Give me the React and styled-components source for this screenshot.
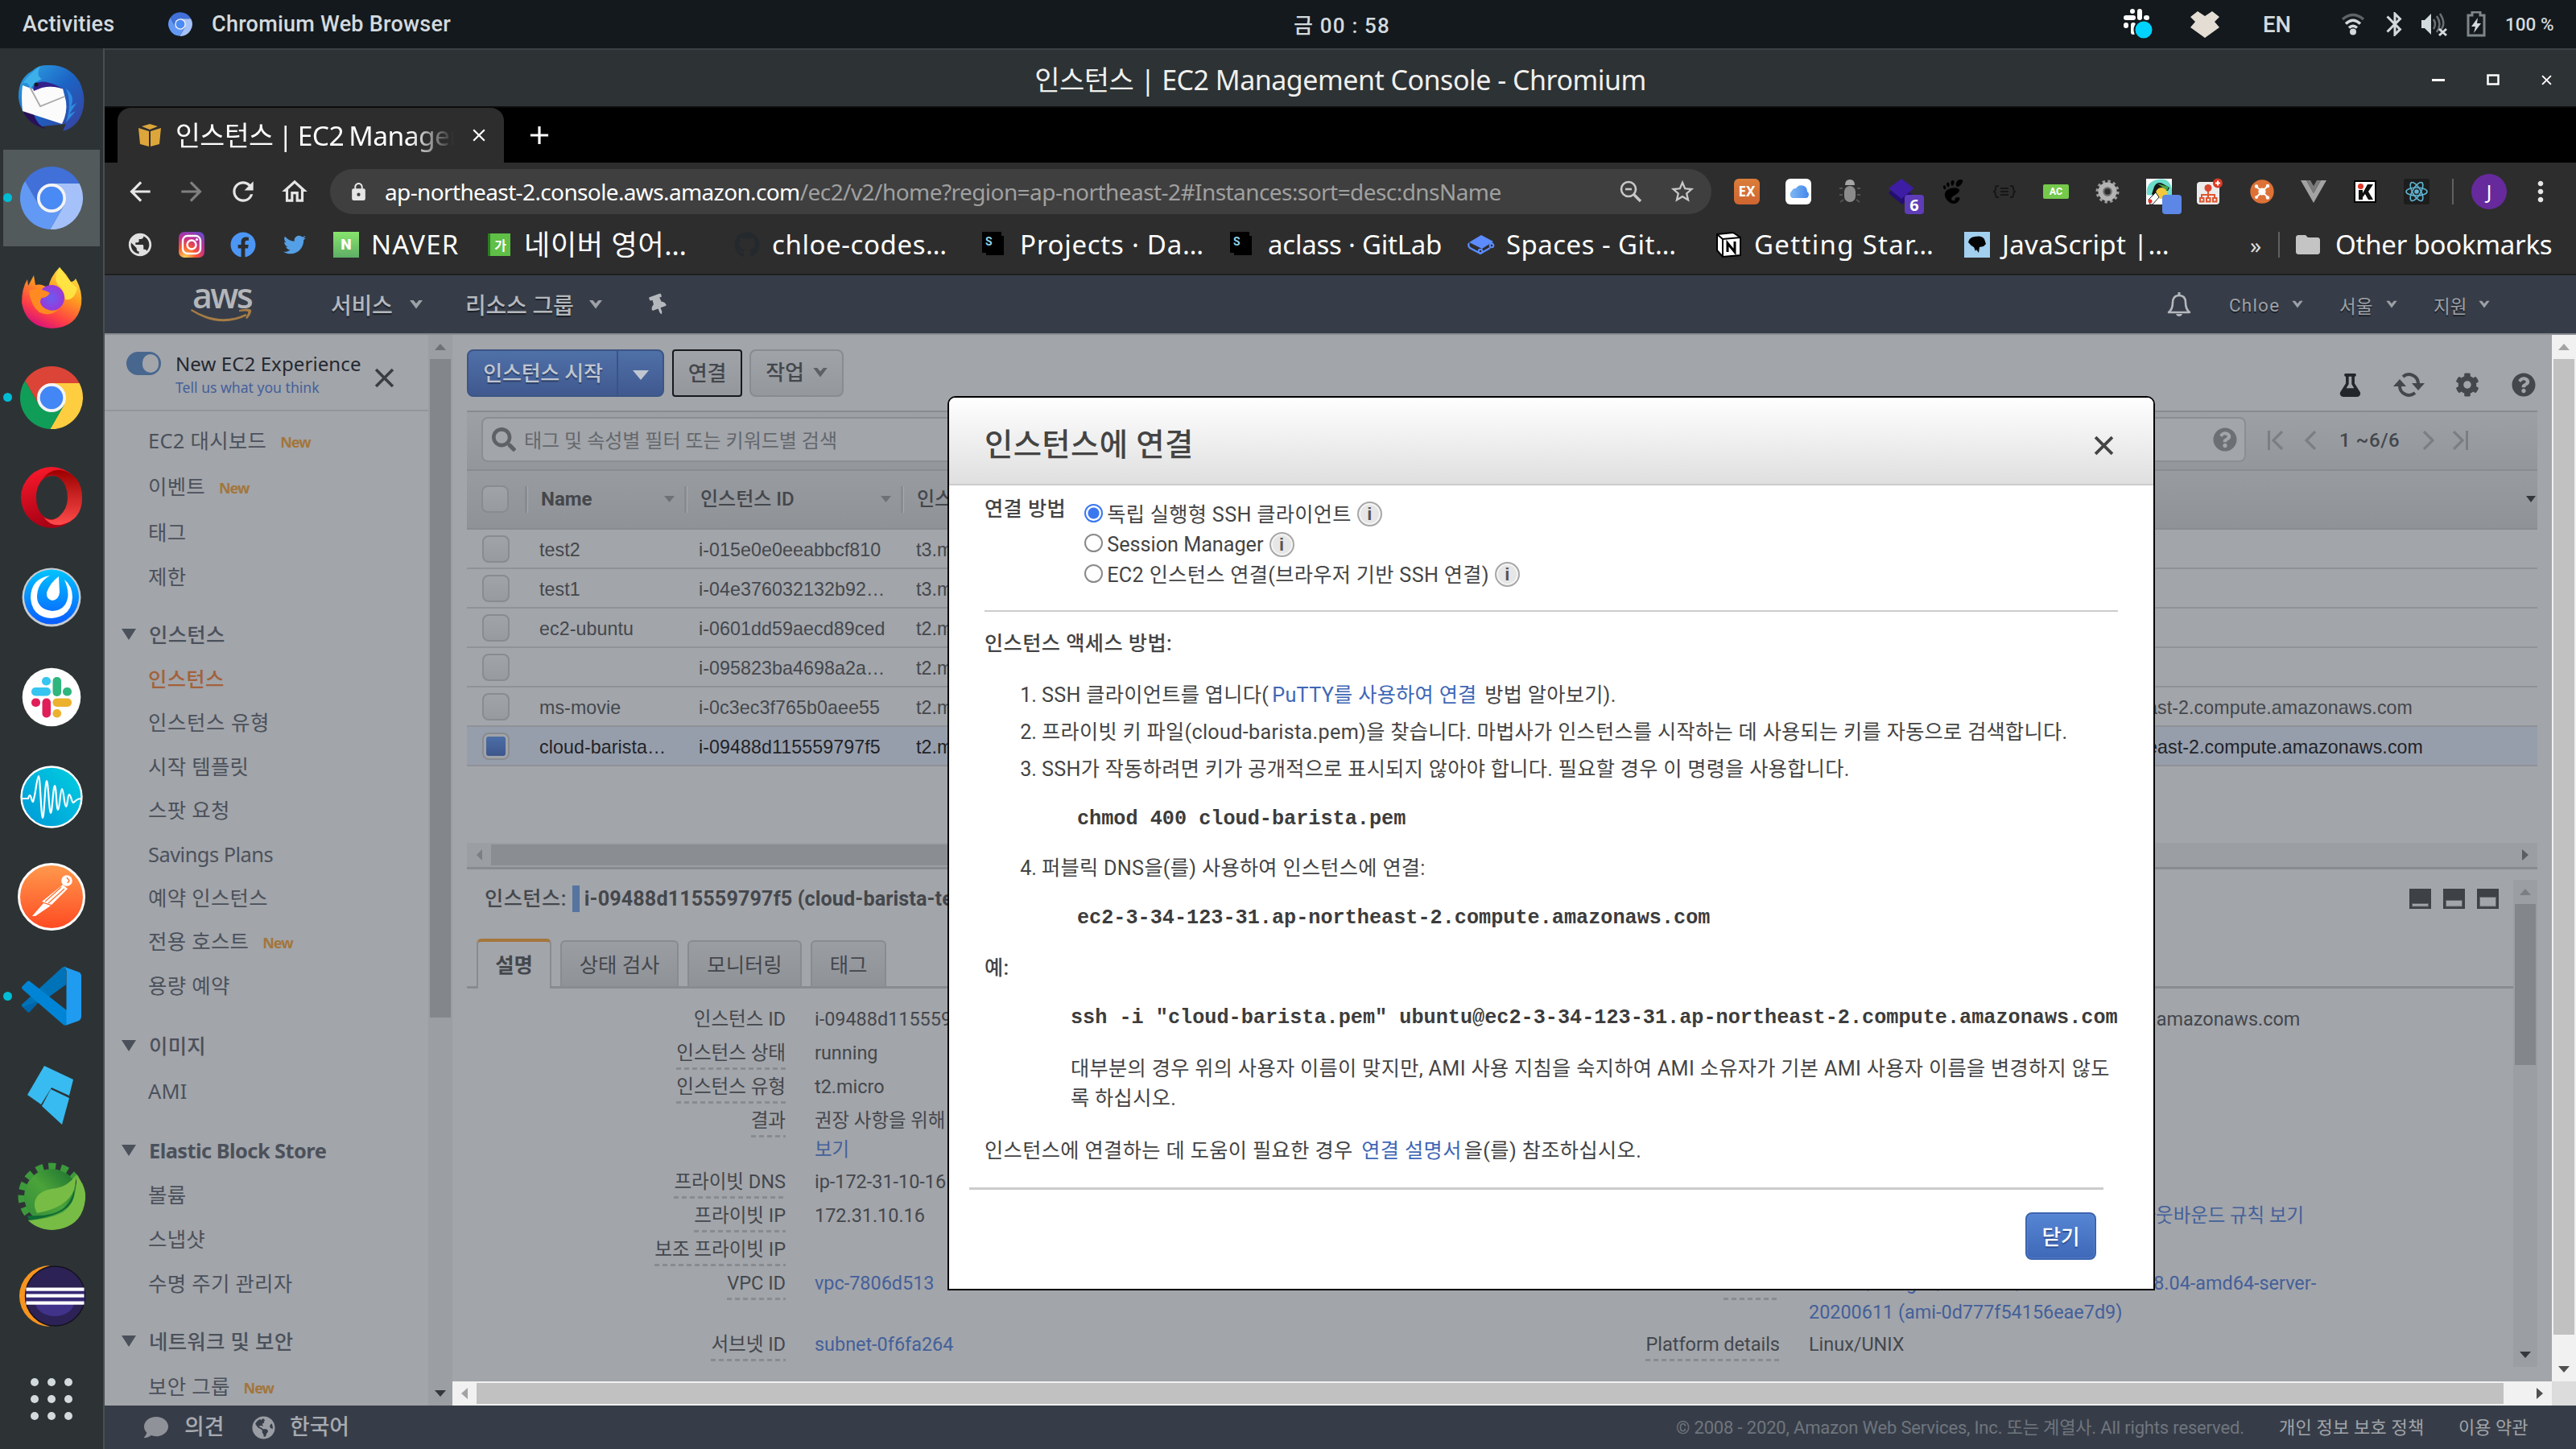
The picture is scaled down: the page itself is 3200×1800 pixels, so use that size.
import React from "react";
import styled, { createGlobalStyle, css } from "styled-components";
import {
  MdArrowBack, MdArrowForward, MdRefresh, MdLock, MdOutlineHome, MdStarBorder, MdMoreVert,
  MdFolder, MdBluetooth, MdAdd, MdClose, MdPublic,
} from "react-icons/md";
import {
  FaTwitter, FaFacebook, FaGithub, FaFlask, FaCog, FaQuestionCircle,
  FaThumbtack, FaSearch, FaComment, FaGlobeAmericas,
} from "react-icons/fa";
import { SiGnome } from "react-icons/si";

const ui = 'Roboto, "Noto Sans CJK KR", sans-serif';
const humanist = '"Noto Sans", "Noto Sans CJK KR", sans-serif';
const arial = '"Liberation Sans", "Noto Sans CJK KR", sans-serif';
const mono = '"Liberation Mono", monospace';

const dim = {
  bg: "#a2a5aa", line: "#888b90", text: "#44474c", nav: "#4b515b", link: "#44609a",
  header: "#373d48", track: "#9b9fa3", thumb: "#83878c",
};

const Global = createGlobalStyle`
  html, body { margin: 0; background: #000; overflow: hidden; }
  * { box-sizing: border-box; }
  svg { display: block; flex: none; }
`;

/* ---------- shell ---------- */
const Screen = styled.div`
  width: 3200px; height: 1800px; display: flex; flex-direction: column;
  font-family: ${ui}; color: ${dim.text}; white-space: nowrap; overflow: hidden;
`;
const TopBar = styled.header`
  height: 60px; flex: none; background: #14191d; color: #d3dade; font-size: 26px; font-weight: 500;
  display: grid; align-items: center;
  grid-template-columns: 208px 55px 1344px 1030px 84px 90px 97px 49px 49px 58px 48px 1fr;
  & > :first-child { padding-left: 28px; }
`;
const TopText = styled.span`
  letter-spacing: ${(p) => p.$ls || 0}px; font-size: ${(p) => p.$s || 26}px; font-weight: ${(p) => p.$w || 500};
`;
const Clock = styled(TopText)`margin-top: -2px;`;
const Below = styled.div`flex: 1; display: flex; min-height: 0;`;
const Dock = styled.nav`
  width: 130px; flex: none; background: #2d3335; border-right: 2px solid #484e51;
  display: flex; flex-direction: column;
`;
const DockItem = styled.div`
  height: 124px; width: 128px; display: flex; align-items: center; justify-content: center;
  padding: 2px 4px; position: relative;
`;
const DockTile = styled.div`
  width: 120px; height: 120px; display: flex; align-items: center; justify-content: center;
  background: ${(p) => (p.$active ? "#535a5b" : "transparent")};
`;
const RunDot = styled.i`
  position: absolute; left: 4px; top: 56px; width: 11px; height: 11px; border-radius: 50%; background: #00bcd4;
`;
const AppGrid = styled.div`
  flex: 1; display: grid; grid-template-columns: repeat(3, 10px); gap: 11px; place-content: center; padding-top: 4px;
  i { width: 10px; height: 10px; border-radius: 50%; background: #d3dade; }
`;

/* ---------- browser ---------- */
const Browser = styled.div`flex: 1; min-width: 0; display: flex; flex-direction: column; position: relative;`;
const TitleBar = styled.div`
  height: 72px; flex: none; background: #2d3234; border-top: 2px solid #3b4144; color: #f0f0ee;
  font: 400 34px/74px ${humanist}; letter-spacing: -0.5px;
  display: grid; grid-template-columns: 1fr auto 1fr; align-items: center;
`;
const WinButtons = styled.div`
  display: flex; justify-content: flex-end; align-items: center; gap: 52px; padding-right: 30px; height: 66px;
`;
const TabStrip = styled.div`
  height: 70px; flex: none; background: #000; border-top: 2px solid #0b0c0c; display: flex; padding-left: 16px;
`;
const Tab = styled.div`
  width: 480px; height: 68px; background: #2d2d2d; border-radius: 16px 16px 0 0; color: #fff;
  display: grid; grid-template-columns: 28px 346px 1fr; column-gap: 18px; align-items: center; padding-left: 26px;
`;
const TabTitle = styled.div`
  overflow: hidden; font: 400 33.6px/64px ${humanist}; letter-spacing: -0.55px; word-spacing: -2px;
  mask-image: linear-gradient(90deg, #000 84%, transparent 100%);
`;
const NewTab = styled.div`color: #fff; display: flex; align-items: center; margin-left: 25px; font-size: 38px;`;
const Toolbar = styled.div`
  height: 72px; flex: none; background: #2d2d2d; display: flex; align-items: center; color: #e6e6e6;
`;
const NavButtons = styled.div`
  display: grid; grid-template-columns: repeat(4, 64px); justify-items: center; width: 268px; padding-left: 12px;
  margin-right: 12px; font-size: 38px;
`;
const NavIcon = styled.span`color: ${(p) => (p.$off ? "#808080" : "#e6e6e6")};`;
const Address = styled.div`
  width: 1716px; height: 56px; border-radius: 28px; background: #3f3f3f; display: flex; align-items: center;
  padding: 0 4px 0 23px; font: 400 28px/54px ${humanist};
`;
const UrlHost = styled.span`color: #fff; margin-left: 20px; letter-spacing: -0.63px;`;
const UrlPath = styled.span`color: #a0a0a0; letter-spacing: -0.56px; flex: 1;`;
const AddressIcon = styled.span`width: 64px; display: flex; justify-content: center; color: #c8c8c8;`;
const Extensions = styled.div`
  display: grid; grid-template-columns: repeat(14, 64px); justify-items: center; align-items: center; margin-left: 12px;
`;
const Ext = styled.div`position: relative; width: 32px; height: 32px; display: flex; align-items: center; justify-content: center;`;
const ExtBadge = styled.span`
  position: absolute; left: 20px; top: 20px; width: 24px; height: 24px; border-radius: 4px; background: ${(p) => p.$c};
  color: #fff; font: 700 20px/25px ${humanist}; text-align: center;
`;
const ExBox = styled.div`
  width: 32px; height: 32px; border-radius: 6px; background: linear-gradient(#db7d3a, #cf6530); color: #fff;
  font: 700 17px/32px ${humanist}; text-align: center;
`;
const AcBox = styled.div`
  width: 32px; height: 18px; border-radius: 2px; background: #75c94b; color: #fff;
  font: 700 12.5px/18px ${ui}; text-align: center;
`;
const Divider = styled.i`width: 2px; height: 32px; background: #606060; margin-left: ${(p) => p.$ml || 0}px;`;
const Avatar = styled.div`
  width: 44px; height: 44px; border-radius: 50%; background: #662a9c; color: #fff; margin: 0 22px;
  font: 400 24px/44px ${humanist}; text-align: center;
`;
const Bookmarks = styled.div`
  height: 68px; flex: none; background: #2d2d2d; border-bottom: 2px solid #1f1f1f; color: #fff; display: flex;
  align-items: center; padding-left: 12px; padding-bottom: 6px;
`;
const IconMark = styled.div`width: ${(p) => p.$w || 64}px; display: flex; justify-content: center; font-size: 32px; color: ${(p) => p.$c || "#fff"};`;
const MarkGap = styled.i`width: 16px;`;
const Bookmark = styled.div`width: ${(p) => p.$w}px; display: flex; align-items: center; gap: 15px;`;
const MarkIcon = styled.div`width: 32px; height: 32px; display: flex; align-items: center; justify-content: center; font-size: 32px;`;
const MarkLabel = styled.span`font: 400 ${(p) => p.$s || 33}px/60px ${humanist}; letter-spacing: ${(p) => p.$ls || 0}px;`;
const NBox = styled.div`
  width: 32px; height: 32px; background: linear-gradient(#87e46c, #5fae66); color: #fff;
  font: 900 19px/32px ${ui}; text-align: center;
`;
const GaBox = styled.div`
  width: 28px; height: 28px; background: #5fbf46; color: #fff; border-left: 3px solid #2c7d22; font: 700 16px/30px ${humanist}; text-align: center;
`;
const ShellBox = styled.div`
  width: 24px; height: 26px; background: #000; color: #8fd0e8; font: 700 14px/24px ${ui}; padding-left: 4px; align-self: flex-start;
  margin-right: 8px; box-shadow: 4px 4px 0 -1px #000;
`;
const More = styled.span`font: 400 28px/60px ${humanist}; color: #ddd; margin-left: 47px; width: 35px;`;

/* ---------- console ---------- */
const AwsHeader = styled.div`
  height: 74px; flex: none; background: ${dim.header}; border-bottom: 2px solid #888c92; color: #b4b8bd;
  display: grid; align-items: center; text-shadow: 0 2px 1px #1c2027;
  grid-template-columns: 281px 98px 69px 154px 73px 1887px 77px 78px 59px 58px 59px 56px 1fr;
  & > :first-child { margin-left: 107px; }
`;
const AwsLogo = styled.div`
  width: 76px; height: 72px; font: 600 43px/50px "Open Sans", sans-serif; letter-spacing: -2.6px; color: #b4b6ba;
  padding-left: 2px; text-shadow: none;
  svg { margin: -9px 0 0 -2px; }
`;
const NavText = styled.span`font-size: 28px; font-weight: 500; letter-spacing: -0.2px;`;
const NavSmall = styled.span`font-size: 22.5px; letter-spacing: ${(p) => p.$ls || 0}px; color: #9da1a7; padding-top: 2px;`;
const Pin = styled(FaThumbtack)`transform: rotate(-20deg);`;
const Console = styled.div`height: 1330px; flex: none; display: flex; background: ${dim.bg};`;

const Sidebar = styled.aside`width: 402px; height: 1330px; overflow: hidden; font-family: ${humanist}; color: ${dim.nav};`;
const Experience = styled.div`
  height: 95px; border-bottom: 2px solid #92969b; display: flex; padding: 21px 0 0 27px;
`;
const Toggle = styled.div`
  width: 43px; height: 29px; border-radius: 15px; background: #48678f; display: flex; justify-content: flex-end; padding: 3px;
  i { width: 20px; height: 23px; border-radius: 12px; background: ${dim.bg}; }
`;
const ExperienceText = styled.div`margin: -2px 0 0 18px; width: 247px; font-size: 24px; line-height: 34px; color: #24282f; letter-spacing: 0.1px;`;
const ExperienceSub = styled.div`font-size: 17.6px; line-height: 24px; color: ${dim.link}; letter-spacing: 0;`;
const ExperienceClose = styled.div`padding-top: 20px;`;
const NavList = styled.div`padding-top: 8px;`;
const NavItem = styled.div`
  height: ${(p) => p.$h || 54.4}px; line-height: ${(p) => p.$h || 54.4}px; padding-left: 54px; font-size: 25.4px;
  display: flex; letter-spacing: ${(p) => p.$ls ?? 0.3}px;
  ${(p) => p.$on && css`color: #a3623a; font-weight: 500; letter-spacing: 0.3px;`}
`;
const NewTag = styled.sup`
  font-size: 18px; font-weight: 700; color: #a3763c; margin-left: 17px; line-height: inherit; vertical-align: 0; letter-spacing: -1px;
  padding-top: 2px;
`;
const NavGroup = styled.div`
  margin-top: ${(p) => p.$mt || 17}px; height: 56px; font: 500 25.4px/56px ${humanist}; display: flex; align-items: center;
  padding-left: 21px; gap: 16px; letter-spacing: 0.3px; span { font-weight: ${(p) => p.$w || 500}; letter-spacing: ${(p) => p.$ls ?? 0.3}px; }
`;

const VBar = styled.div`
  width: 30px; flex: none; height: ${(p) => p.$h}px; background: ${(p) => p.$bg}; display: flex; flex-direction: column; align-items: center;
`;
const HBar = styled.div`height: 30px; flex: none; width: ${(p) => p.$w}px; background: ${(p) => p.$bg}; display: flex; align-items: center;`;
const BarEnd = styled.div`width: 30px; height: 30px; flex: none; display: flex; align-items: center; justify-content: center;`;
const VThumb = styled.i`width: 26px; height: ${(p) => p.$h}px; background: ${(p) => p.$c}; margin-bottom: auto;`;
const HThumb = styled.i`height: 26px; width: ${(p) => p.$w}px; background: ${(p) => p.$c}; margin-right: auto;`;

const Right = styled.div`flex: 1; min-width: 0; display: flex; flex-direction: column;`;
const RightTop = styled.div`display: flex; height: 1300px;`;
const RightBottom = styled.div`display: flex; height: 30px; background: #dcdcdc;`;
const Panel = styled.main`width: 2608px; height: 1300px; padding: 0 18px; display: flex; flex-direction: column; color: ${dim.text};`;
const Actions = styled.div`height: 94px; display: flex; padding-top: 18px;`;
const btn = css`height: 59px; border-radius: 8px; font: 500 26px/57px ${ui}; letter-spacing: -0.2px; text-align: center;`;
const Split = styled.div`
  ${btn} width: 245px; background: linear-gradient(#4f70a8, #40598f); border: 2px solid #3c5585; color: #c0c6d0;
  display: flex; text-shadow: 0 2px 1px #2c4068;
`;
const SplitMain = styled.div`width: 186px; border-right: 2px solid #3a5386; padding-left: 1px;`;
const SplitArrow = styled.div`flex: 1; display: flex; align-items: center; justify-content: center; padding-top: 5px;`;
const FocusButton = styled.div`${btn} width: 87px; margin-left: 10px; border: 2px solid #17191c; border-radius: 4px; background: linear-gradient(#a0a3a8, #94989d);`;
const GreyButton = styled.div`
  ${btn} width: 117px; margin-left: 9px; border: 2px solid ${dim.line}; background: linear-gradient(#a0a3a8, #94989d);
  display: flex; align-items: center; justify-content: center; gap: 11px;
  svg { margin-top: -2px; }
`;
const Tools = styled.div`
  margin-left: auto; display: grid; grid-template-columns: 26px 39px 28px 30px; column-gap: 40px; align-items: center; height: 86px; margin-top: 1px;
  padding-right: 2px; color: #44474c; font-size: 30px;
  svg:nth-child(1) { margin-left: -2px; } svg:nth-child(3) { margin-left: -2px; }
`;
const FilterBar = styled.div`
  height: 73px; border-top: 2px solid ${dim.line}; background: linear-gradient(#9da1a6, #93979c); display: flex; padding: 6px 0 0 18px;
`;
const SearchBox = styled.div`
  width: 2192px; height: 56px; border: 2px solid #8a8e93; border-radius: 8px; background: ${dim.bg}; display: flex; align-items: center;
  padding: 0 9px 0 11px; font-size: 24px; color: #64686d; justify-content: space-between;
  span { flex: 1; margin-left: 10px; line-height: 52px; padding-top: 3px; }
`;
const Pager = styled.div`
  display: grid; grid-template-columns: 46px 43px 103px 37px 20px; margin-left: 27px; align-items: center; height: 58px; color: #7b7f84;
  b { font-weight: 500; font-size: 24px; color: ${dim.text}; letter-spacing: 0.5px; }
`;
const cols = css`display: grid; align-items: center; grid-template-columns: 72px 198px 269px 1fr;`;
const THead = styled.div`
  ${cols} height: 75px; border-top: 2px solid ${dim.line}; border-bottom: 2px solid ${dim.line};
  background: linear-gradient(#989b9f, #8f9297); font: 500 24px/38px ${ui};
`;
const Th = styled.div`
  height: 33px; border-left: 3px solid #888b90; box-shadow: inset 1px 0 0 #a8abb0; display: flex; align-items: center;
  justify-content: space-between; padding: 0 ${(p) => p.$pr ?? 12}px 0 17px; margin-top: -1px; font-weight: ${(p) => p.$w || 500};
`;
const Check = styled.i`
  width: 34px; height: 34px; margin-left: ${(p) => (p.$head ? 18 : 19)}px; border: 2px solid ${dim.line}; border-radius: 8px; display: block;
  background: ${(p) => (p.$on ? "linear-gradient(#4c6da6,#3e578d) content-box, #a0a3a8" : "linear-gradient(#a0a3a8,#979a9f)")};
  padding: 3px; ${(p) => p.$head && "margin-top: -1px;"}
`;
const Tr = styled.div`
  display: grid; align-items: center; grid-template-columns: 90px 198px 270px 1fr;
  height: 49px; border-bottom: 2px solid #8f9297; font: 400 23.2px/46px ${arial}; letter-spacing: 0.1px;
  span { padding-top: 2px; }
  ${(p) => p.$on && css`background: #979eab; color: #1f2329;`}
`;
const TypeCell = styled.div`display: flex; justify-content: space-between;`;
const Dns = styled.span`margin-right: ${(p) => p.$r}px;`;
const TableFoot = styled.div`margin-top: 95px;`;
const Rule = styled.i`display: block; height: ${(p) => p.$h || 2}px; background: ${(p) => p.$c || dim.line}; margin-top: ${(p) => p.$mt || 0}px;`;

const Detail = styled.section`height: 636px; display: flex; overflow: hidden;`;
const DetailBody = styled.div`width: 2542px; display: flex; flex-direction: column;`;
const DetailBar = styled.div`padding-top: 13px;`;
const DetailTitle = styled.div`
  height: 86px; display: flex; align-items: center; font: 700 25.2px/37px ${ui}; padding: 0 18px 14px 22px; letter-spacing: 0.1px;
  span { font-weight: 500; letter-spacing: 0.5px; }
  i { width: 9px; height: 33px; background: #56749f; margin: 0 6px 0 7px; }
  div { margin-left: auto; display: flex; gap: 15px; }
`;
const Tabs = styled.div`height: 62px; display: flex; align-items: flex-end; padding-left: 12px; border-bottom: 3px solid ${dim.line}; font-size: 25.4px;`;
const DTab = styled.div`
  width: ${(p) => p.$w}px; height: ${(p) => (p.$on ? 60 : 57)}px; line-height: 58px; text-align: center; margin-right: ${(p) => p.$mr ?? 11}px;
  border: 2px solid ${dim.line}; border-bottom: 0; border-radius: 6px 6px 0 0; background: linear-gradient(#9a9da2, #8f9398);
  ${(p) => p.$on && css`background: ${dim.bg}; font-weight: 700; border-top: 4px solid #a5763c; margin-bottom: -3px; height: 62px;`}
`;
const Facts = styled.div`
  display: grid; grid-template-columns: 396px 767px 396px 1fr; column-gap: 36px; margin-top: 17px; font-size: 23.6px; align-items: start;
  grid-template-rows: 42px 42px 42px 76px 42px 42px 42px 76px 42px; color: ${dim.text};
`;
const Label = styled.span`
  justify-self: end; line-height: 42px; height: 42px; letter-spacing: -0.05px;
  ${(p) => p.$tip && css`background: repeating-linear-gradient(90deg, ${dim.line} 0 6px, transparent 6px 10px) 0 100% / 100% 3px no-repeat;`}
`;
const Value = styled.span`
  font-size: 23.42px; line-height: ${(p) => p.$lh || 42}px; ${(p) => p.$link && `color: ${dim.link};`} white-space: pre-line; padding-top: ${(p) => p.$pt || 0}px;
  em { font-style: normal; color: ${dim.link}; }
`;

const Footer = styled.footer`
  height: 54px; flex: none; background: ${dim.header}; display: grid; align-items: center; color: #a7abb1; font: 500 26.8px/52px ${ui};
  grid-template-columns: 50px 84px 47px 1722px 749px 223px 1fr; padding-left: 49px;
`;
const FootText = styled.span`font-size: 22px; font-weight: 400; letter-spacing: ${(p) => p.$ls || 0}px; color: ${(p) => p.$c || "#a0a4aa"}; padding-top: 1px;`;

/* ---------- dialog ---------- */
const Dialog = styled.div`
  position: absolute; left: 1047px; top: 432px; width: 1500px; height: 1111px; background: #fff; border: 2px solid #000;
  border-radius: 10px 10px 0 0; color: #444; font-size: 25.2px; letter-spacing: 0.36px; overflow: hidden;
`;
const DialogHead = styled.div`
  height: 109px; background: linear-gradient(#fff, #dfdfdf); border-bottom: 2px solid #ccc; display: flex; align-items: center;
  justify-content: space-between; padding: 11px 49px 0 44px; font: 500 38.4px/60px ${ui};
`;
const DialogBody = styled.div`padding: 11px 44px 0 44px; line-height: 37px;`;
const Strong = styled.b`font-weight: 500; letter-spacing: 0.45px; display: block; margin-top: ${(p) => p.$mt || 0}px;`;
const Methods = styled.div`display: flex; gap: 23px;`;
const MethodList = styled.div`padding-top: 7px; margin-bottom: 1px;`;
const Method = styled.div`height: 37.5px; line-height: 38px; display: flex; align-items: center; letter-spacing: ${(p) => p.$ls ?? 0.33}px;`;
const Radio = styled.i`
  width: 23px; height: 23px; border-radius: 50%; border: 2px solid ${(p) => (p.$on ? "#3b78f0" : "#8a8a8a")}; margin: -5px 5px 0 0;
  background: ${(p) => (p.$on ? "radial-gradient(circle, #3b78f0 0 6.5px, #fff 7.5px)" : "#fff")};
`;
const Info = styled.span`
  width: 31px; height: 31px; border-radius: 50%; border: 2px solid #a8a8a8; background: #e6e6e6; box-shadow: inset 0 0 0 2px #f5f5f5;
  font: 700 22px/27px ${arial}; text-align: center; color: #555; margin: -2px 0 0 7px; letter-spacing: 0;
`;
const Steps = styled.div`margin-top: 23px; display: grid; grid-template-columns: 71px 1fr;`;
const StepNo = styled.span`line-height: 46px; text-align: right; padding-right: 6px; letter-spacing: 0;`;
const Step = styled.div`line-height: 46px; letter-spacing: ${(p) => p.$ls ?? 0.31}px;`;
const Link = styled.a`color: #3f67b5; padding: 0 ${(p) => p.$r ?? 3}px 0 4px;`;
const Code = styled.code`
  grid-column: 1 / -1; display: block; font: 700 25.21px/${(p) => p.$h}px ${mono}; letter-spacing: 0; height: ${(p) => p.$h}px; padding-left: ${(p) => p.$pl}px; color: #3c3c3c;
`;
const Note = styled.p`margin: 0 0 0 107px; white-space: pre-line; letter-spacing: 0.34px;`;
const Help = styled.p`margin: 28px 0 0; letter-spacing: 0.4px;`;
const DialogFoot = styled.div`
  margin: 27px 62px 0 25px; border-top: 3px solid #ccc; display: flex; justify-content: flex-end; padding: 28px 9px 0 0;
`;
const Close = styled.button`
  width: 88px; height: 59px; border: 2px solid #3c64b0; border-radius: 8px; background: linear-gradient(#5585d4, #3f68b8); color: #fff;
  font: 500 25.6px/52px ${ui}; text-shadow: 0 2px 1px #2d4d8f; padding: 3px 0 0; box-shadow: inset 0 0 0 1px #6b95da66;
`;

/* ---------- small drawings ---------- */
const Tri = ({ d = "down", w = 14, h = 8, c = "#505050" }) => {
  const p = { down: `0,0 ${w},0 ${w / 2},${h}`, up: `0,${h} ${w},${h} ${w / 2},0`, left: `${w},0 ${w},${h} 0,${h / 2}`, right: `0,0 0,${h} ${w},${h / 2}` }[d];
  return <svg width={w} height={h}><polygon points={p} fill={c} /></svg>;
};
const Caret = ({ w = 16, h = 10, c = "#9da1a7" }) => (
  <svg width={w} height={h + 2} viewBox="0 0 16 12"><path d="M0 1h4.5l3.5 4L11.500 1H16L8 11.500z" fill={c} /></svg>
);
const Cross = ({ s = 24, c = "#3a3d42", w = 3.4 }) => (
  <svg width={s} height={s} viewBox="0 0 24 24"><path d="M2 2l20 20M22 2L2 22" stroke={c} strokeWidth={w} /></svg>
);
const Chev = ({ flip, bar }) => (
  <svg width="20" height="24" viewBox="0 0 20 24">
    <g transform={flip ? "translate(20 0) scale(-1 1)" : undefined}>
      {bar && <path d="M1.500 0v24" stroke="#7b7f84" strokeWidth="3" />}
      <path d={bar ? "M18 1L7 12l11 11" : flip ? "M18 1L7 12l11 11" : "M13 1L2 12l11 11"} fill="none" stroke="#7b7f84" strokeWidth="3.200" />
    </g>
  </svg>
);
const PaneIcon = ({ y }) => (
  <svg width="27" height="25"><rect width="27" height="25" fill="#3e4146" /><rect x="3.500" y={y} width="20" height={22 - y} fill={dim.bg} stroke="#63666b" strokeWidth="1" /></svg>
);
const Box = ({ children, s = 84 }) => <svg width={s} height={s} viewBox="0 0 84 84">{children}</svg>;

const Wheel = ({ top, left, right, hub, s = 84 }) => (
  <Box s={s}>
    <g transform="translate(42 42)">
      <path d="M-32.900-21L-15.600 9L0 0L0-18L34.600-18A39 39 0 0 0-32.900-21z" fill={top} />
      <path d="M34.600-18L0-18L0 0L15.600 9L-1.700 39A39 39 0 0 0 34.600-18z" fill={right} />
      <path d="M-1.700 39L15.600 9L0 0L-15.600 9L-32.900-21A39 39 0 0 0-1.700 39z" fill={left} />
      <circle r="18" fill="#f4f4f4" /><circle r="14.300" fill={hub} />
    </g>
  </Box>
);
const Chromium = ({ s }) => <Wheel s={s} top="#4170d8" left="#6299f5" right="#a4c1f9" hub="#4a8af4" />;
const Chrome = () => <Wheel top="#dc4437" left="#109d58" right="#fecd40" hub="#4386f5" />;

const Thunderbird = () => (
  <Box>
    <defs><linearGradient id="tb" x1="0" y1="0" x2="1" y2="1"><stop offset="0" stopColor="#2fa8e6" /><stop offset=".5" stopColor="#1c63c4" /><stop offset="1" stopColor="#3a3f9c" /></linearGradient></defs>
    <path d="M18 8Q26 0 38 1Q64 0 77 22Q86 42 80 60Q74 78 56 83L60 74L30 77Q4 66 1 42Q0 18 18 8z" fill="url(#tb)" />
    <path d="M20 62Q24 76 36 80Q14 76 6 57z" fill="#2a1058" />
    <path d="M6 26L20 31Q36 24 56 30L60 46Q62 60 55 74L6 58Q4 40 6 26z" fill="#fbfbfb" />
    <path d="M15 28L28 52L58 40" fill="none" stroke="#a9a9a9" strokeWidth="1.800" />
    <path d="M22 24Q30 18 48 26L58 31Q44 25 30 29L20 33Q18 30 22 24z" fill="#33208a" />
    <path d="M6 24Q14 12 28 2Q22 14 30 18Q20 22 16 30Q12 20 6 24z" fill="#3db0ea" />
    <circle cx="23" cy="25" r="2.600" fill="#15181c" />
    <path d="M60 30Q72 40 66 52L73 48L64 62L72 58L60 72Q68 48 60 30z" fill="#2d8be0" />
  </Box>
);
const Firefox = () => (
  <Box>
    <defs>
      <linearGradient id="ff" x1=".8" y1="0" x2=".3" y2="1"><stop offset="0" stopColor="#fff04a" /><stop offset=".4" stopColor="#ff9a1f" /><stop offset=".75" stopColor="#ff3f45" /><stop offset="1" stopColor="#d6107e" /></linearGradient>
      <radialGradient id="fp"><stop offset="0" stopColor="#6a5cf0" /><stop offset="1" stopColor="#9a38d6" /></radialGradient>
    </defs>
    <path d="M52 4Q60 12 66 22Q70 22 72 18Q81 34 79 50Q74 79 42 80Q10 78 5 48Q5 30 12 19L13 27L20 14L22 26Q30 24 38 30Q40 16 52 4z" fill="url(#ff)" />
    <circle cx="42" cy="42" r="16" fill="url(#fp)" />
    <path d="M14 33Q26 28 40 36Q36 42 30 42Q26 46 30 52Q38 60 50 57Q40 66 27 60Q16 52 14 33z" fill="#ff8a22" />
    <path d="M52 4Q44 18 50 26Q58 32 59 44Q70 46 74 30Q62 20 52 4z" fill="#ffe845" opacity=".9" />
  </Box>
);
const Opera = () => (
  <Box>
    <defs><linearGradient id="op" x1="0" y1="0" x2=".3" y2="1"><stop offset="0" stopColor="#ff1b2d" /><stop offset="1" stopColor="#a70014" /></linearGradient><linearGradient id="or" x1="0" y1="0" x2="0" y2="1"><stop offset="0" stopColor="#9c0000" /><stop offset="1" stopColor="#ff4b4b" /></linearGradient></defs>
    <path fillRule="evenodd" d="M42 4A38 38 0 1 0 42 80A38 38 0 1 0 42 4zM43 15C56 15 62 28 62 42S56 69 43 69S23 56 23 42S30 15 43 15z" fill="url(#op)" />
    <path d="M30 20Q40 6 54 8Q80 14 80 42Q80 70 54 76Q40 78 32 66Q42 74 52 65Q62 56 62 42Q62 26 52 18Q42 10 30 20z" fill="url(#or)" />
  </Box>
);
const Mattermost = () => (
  <Box>
    <defs><linearGradient id="mm" x1="0" y1="0" x2="0" y2="1"><stop offset="0" stopColor="#00c3ff" /><stop offset="1" stopColor="#0b5cff" /></linearGradient></defs>
    <circle cx="42" cy="42" r="36.500" fill="#c9ccd0" /><circle cx="42" cy="41.500" r="34" fill="url(#mm)" />
    <path d="M40 15Q16 19 16 43Q18 67 42 68Q67 66 68 42Q68 28 58 20Q64 34 62 43Q59 58 43 59Q25 57 24 42Q24 24 40 15z" fill="#fff" />
    <path d="M51 16L52 36Q51 45 43 46Q35 44 36 36Q40 24 51 16z" fill="#fff" />
  </Box>
);
const Slack = () => (
  <Box>
    <circle cx="42" cy="42" r="36.300" fill="#fff" />
    <g fill="#36c5f0"><rect x="30" y="17" width="11" height="10.500" rx="5" /><rect x="17" y="30" width="24" height="10.500" rx="5" /></g>
    <g fill="#2eb67d"><rect x="43.500" y="17" width="10.500" height="24" rx="5" /><rect x="56" y="30" width="11" height="10.500" rx="5" /></g>
    <g fill="#e01e5a"><rect x="17" y="43.500" width="11" height="10.500" rx="5" /><rect x="30.500" y="43.500" width="10.500" height="24" rx="5" /></g>
    <g fill="#ecb22e"><rect x="43.500" y="43.500" width="23.500" height="10.500" rx="5" /><rect x="43.500" y="57" width="10.500" height="10.500" rx="5" /></g>
  </Box>
);
const Wave = () => (
  <Box>
    <defs><linearGradient id="wv" x1="0" y1="1" x2="1" y2="0"><stop offset="0" stopColor="#0098d8" /><stop offset="1" stopColor="#00cfe0" /></linearGradient></defs>
    <circle cx="42" cy="42" r="37.500" fill="url(#wv)" stroke="#fff" strokeWidth="2.400" />
    <path d="M5 44H13Q15 36 17 44T20 44C22 40 24 16 26 16S29 68 31 68S34 22 36 22S39 62 41 62S44 28 46 28S48 58 50 58S53 32 55 32S58 54 60 54S62 39 64 39S67 49 69 49S72 44 79 44" fill="none" stroke="#fff" strokeWidth="2.200" strokeLinejoin="round" />
  </Box>
);
const Postman = () => (
  <Box>
    <defs><linearGradient id="pm" x1="0" y1="0" x2="0" y2="1"><stop offset="0" stopColor="#ff9a4d" /><stop offset="1" stopColor="#ff4a22" /></linearGradient></defs>
    <circle cx="42" cy="42" r="40.500" fill="url(#pm)" stroke="#fff" strokeWidth="3" />
    <circle cx="61" cy="22" r="6.800" fill="#fff" /><path d="M61 18l3 4-2 3" stroke="#ff7a3b" strokeWidth="1.500" fill="none" />
    <path d="M56 27L62 32L42 52L30 48z" fill="#fff" /><path d="M34 48L54 30M38 50L58 32" stroke="#ff7a3b" strokeWidth="1.500" />
    <path d="M32 50L41 53L22 66L18 66z" fill="#fff" />
  </Box>
);
const VsCode = () => (
  <Box>
    <path d="M6 55L12 61Q13 62 15 61L60 12L59 5z" fill="#0065a9" />
    <path d="M6 55Q4 52 6 51L54 7Q57 4 60 5V27L38 43z" fill="#0073b8" />
    <path d="M6 29L12 23Q13 22 15 23L62 60V74L58 78L6 33Q4 31 6 29z" fill="#0085d6" />
    <path d="M59 78Q61 76 60.500 72V12Q61 7 58 5L77 12Q79 14 79 16V67Q79 70 76 72z" fill="#1f9cf0" />
  </Box>
);
const Kite = () => (
  <Box><path d="M33 4L69 21L64 41L42 31L29 52L12 40z" fill="#38bbf0" /><path d="M41 33L64 44L55 77L30 54z" fill="#38bbf0" /></Box>
);
const Spring = () => (
  <Box>
    <defs><linearGradient id="sp" x1="0" y1="1" x2="1" y2="0"><stop offset="0" stopColor="#2f8a3a" /><stop offset=".5" stopColor="#4ba33a" /><stop offset="1" stopColor="#156b2e" /></linearGradient></defs>
    <circle cx="42" cy="42" r="34" fill="url(#sp)" /><circle cx="42" cy="42" r="37.500" fill="none" stroke="#3d9a3b" strokeWidth="8" strokeDasharray="9 6.700" />
    <path d="M73 15Q86 32 84 46Q80 82 42 84Q24 83 13 72Q40 70 56 62Q74 50 73 15z" fill="#77bc45" />
    <path d="M70 34Q72 50 56 60Q42 68 14 72L12 66Q44 68 58 56Q68 46 70 34z" fill="#0f6b34" />
    <path d="M70 34Q62 56 24 63Q17 50 26 40Q34 33 48 32Q62 30 73 15Q72 26 70 34z" fill="#77bc45" />
  </Box>
);
const Eclipse = () => (
  <Box>
    <path d="M40 4A38 38 0 0 0 40 80Q12 70 12 42Q12 14 40 4z" fill="#f7941e" />
    <circle cx="46.500" cy="42" r="37" fill="#2c2255" stroke="#14121f" strokeWidth="1.500" /><ellipse cx="46" cy="50" rx="24" ry="17" fill="#41328a" />
    <rect x="10" y="32" width="73" height="20" fill="#352873" />
    {[31.500, 39.500, 48.500].map((y) => <rect key={y} x="10.500" y={y} width="72" height="4.200" fill="#fff" />)}
  </Box>
);

const TraySlack = () => (
  <svg width="40" height="40" viewBox="0 0 40 40"><g fill="#fff">
    <rect x="9" y="1" width="6" height="6" rx="3" /><rect x="18" y="1" width="6" height="14" rx="3" /><rect x="1" y="9" width="15" height="6" rx="3" /><rect x="26" y="9" width="7" height="6" rx="3" />
    <rect x="1" y="18" width="6" height="7" rx="3" /><rect x="10" y="18" width="6" height="15" rx="3" /></g><circle cx="26" cy="27" r="11.500" fill="#00d3ff" stroke="#14191d" strokeWidth="2" />
  </svg>
);
const Dropbox = () => <svg width="36" height="34" viewBox="0 0 36 34"><path d="M9 1l9 6 9-6 9 7-6 6 6 7-18 13L0 21l6-7L0 8z" fill="#e3ddd4" /></svg>;
const Wifi = () => (
  <svg width="30" height="28" viewBox="0 0 30 28" fill="none" strokeWidth="3.400">
    <path d="M2 8Q15-3 28 8" stroke="#5d6468" /><path d="M6 13.500Q15 5 24 13.500M10 18.500Q15 14 20 18.500" stroke="#d3dade" /><circle cx="15" cy="23.500" r="4" fill="#d3dade" />
  </svg>
);
const Volume = () => (
  <svg width="36" height="32" viewBox="0 0 36 32"><path d="M2 11h4l8-8v26l-8-8H2z" fill="#d3dade" /><g fill="none" stroke="#6a7276" strokeWidth="2.500"><path d="M17 10q4 6 0 12M21 6q7 10 0 20M25 3q8 12 1 20" /></g><path d="M24 22l9 8m0-8l-9 8" stroke="#d3dade" strokeWidth="3" /></svg>
);
const Battery = () => (
  <svg width="24" height="32" viewBox="0 0 24 32"><path d="M7 1h10v4h5v25H2V5h5z" fill="none" stroke="#7e868a" strokeWidth="3" /><path d="M14 8l-8 11h5l-2 8 9-12h-5z" fill="#d3dade" /></svg>
);
const ZoomOut = () => (
  <svg width="28" height="28" viewBox="0 0 28 28" fill="none" stroke="#c8c8c8" strokeWidth="2.600"><circle cx="11" cy="11" r="9" /><path d="M7 11h8" /><path d="M17.500 17.500L26 26" strokeWidth="3.400" /></svg>
);
const Smile = () => (
  <svg width="76" height="17" viewBox="0 0 76 17"><path d="M1 1Q36 22 68 7L70 9Q36 26 0 3z" fill="#a67c45" /><path d="M60 2Q72-1 75 2Q76 6 70 13L68 12Q72 5 71 4Q69 3 60 4z" fill="#a67c45" /></svg>
);
const Bell = () => (
  <svg width="30" height="32" viewBox="0 0 30 32"><path d="M2 26Q7 22 7 14Q7 5 15 5T23 14Q23 22 28 26z" fill="none" stroke="#b4b8bd" strokeWidth="2.600" strokeLinejoin="round" /><path d="M15 1v4" stroke="#b4b8bd" strokeWidth="3" /><path d="M11 28h8q-1 3-4 3t-4-3z" fill="#b4b8bd" /></svg>
);
const Sync = () => (
  <svg width="39" height="30" viewBox="0 0 39 30"><g fill="none" stroke="#44474c" strokeWidth="4"><path d="M8 17A11.500 11.500 0 0 0 27 25" /><path d="M31 13A11.500 11.500 0 0 0 12 5" /></g><path d="M0 17L8 8L16 17zM23 13L31 22L39 13z" fill="#44474c" /></svg>
);
const Cube = () => (
  <svg width="28" height="28" viewBox="0 0 28 28"><path d="M4 3L14 0l10 3-10 4zM0 5l13 4v19L2 25zM28 5L15 9v19l11-3z" fill="#dda63b" /></svg>
);
const Gear = () => (
  <svg width="30" height="30" viewBox="-15 -15 30 30"><circle r="12.500" fill="none" stroke="#9b9b9b" strokeWidth="4" strokeDasharray="3.300 3.240" /><circle r="8.500" fill="none" stroke="#b4b4b4" strokeWidth="6" /><circle r="4.500" fill="#2d2d2d" stroke="#777" strokeWidth="1.500" /></svg>
);
const Layers = () => <svg width="32" height="32"><path d="M0 18L12 6l18 14-13 12z" fill="#230f70" /><path d="M16 0l15.500 12L16 25 0 12z" fill="#3d1da3" /></svg>;
const ICloud = () => (
  <svg width="32" height="32"><defs><linearGradient id="ic" x1="0" x2="1"><stop offset="0" stopColor="#7fb8f4" /><stop offset="1" stopColor="#4487ea" /></linearGradient></defs><rect width="32" height="32" rx="6" fill="#fff" /><path d="M8 24a5.500 5.500 0 0 1 0-9a5 5 0 0 1 5-3a7.500 7.500 0 0 1 14 4a4.500 4.500 0 0 1-1 8z" fill="url(#ic)" /></svg>
);
const Braces = () => <svg width="28" height="16" fill="none" stroke="#161616" strokeWidth="2"><path d="M7 1H5q-2 0-2 3t-2 4q2 1 2 4t2 3h2M21 1h2q2 0 2 3t2 4q-2 1-2 4t-2 3h-2M9 4h10M9 8h10M9 12h10" /></svg>;
const Cartoon = () => (
  <svg width="32" height="32"><rect width="32" height="32" fill="#fff" /><path d="M1 20Q-1 4 14 1Q30-2 32 14V24z" fill="#6cdccb" /><path d="M10 10q4-8 12-3l7 4-2 4-12-1-5 8-3-3z" fill="#151515" /><path d="M14 6l14 4-2 5z" fill="#46a846" /><circle cx="19" cy="18" r="7" fill="#f5c83c" /><path d="M3 26l9-9 4 6-8 9H5z" fill="#fff" stroke="#222" /><circle cx="5" cy="28" r="2.500" fill="#e2362a" /></svg>
);
const OrgChart = () => (
  <svg width="34" height="34"><rect x="0" y="5" width="28" height="28" rx="4" fill="#ececec" /><g fill="none" stroke="#e0562f" strokeWidth="2"><path d="M14 16v9M6 25v-4h16v4" /><rect x="4" y="25" width="4.500" height="4.500" /><rect x="12" y="25" width="4.500" height="4.500" /><rect x="20" y="25" width="4.500" height="4.500" /></g><circle cx="14" cy="12.500" r="4.500" fill="#d9472f" /><circle cx="26" cy="6.500" r="6" fill="#dd3b25" /><path d="M26 3.500v6M23 6.500h6" stroke="#fff" strokeWidth="2" /></svg>
);
const Bones = () => (
  <svg width="30" height="30"><circle cx="15" cy="15" r="14.700" fill="#de7136" /><g stroke="#fff" strokeWidth="2" strokeLinecap="round"><path d="M8 9l5 4M22 8l-5 5M8 22l5-5M22 22l-4-4" /></g><circle cx="15" cy="15" r="4.600" fill="#fff" /><g fill="#fff"><circle cx="8" cy="8.500" r="2.200" /><circle cx="22" cy="8" r="2.200" /><circle cx="8" cy="22" r="1.900" /><circle cx="22" cy="22.500" r="2.200" /></g></svg>
);
const Vee = () => <svg width="32" height="28"><path d="M0 0h7l9 16L25 0h7L16 28z" fill="#a3a3a3" /><path d="M7 0h5l4 7 4-7h5l-9 16z" fill="#7b7b7b" /></svg>;
const KBox = () => <svg width="28" height="28"><rect x="1" y="1" width="26" height="26" fill="#fff" stroke="#000" strokeWidth="2" /><path d="M6 12h5v4l6-11h7l-6 9 6 10h-6l-4-7-3 4v3H6z" fill="#111" /><circle cx="8.500" cy="7.500" r="3.500" fill="#e0382a" /></svg>;
const ReactBox = () => <svg width="32" height="32"><rect width="32" height="32" rx="3" fill="#1d1d1d" /><g fill="none" stroke="#5eb5d3" strokeWidth="1.600" transform="translate(16 16)">{[0, 60, 120].map((a) => <ellipse key={a} rx="13" ry="5" transform={`rotate(${a})`} />)}<circle r="2" fill="#5eb5d3" /></g></svg>;
const Insta = () => (
  <svg width="32" height="32"><defs><radialGradient id="ig" cx=".25" cy="1" r="1.200"><stop offset="0" stopColor="#ffd45c" /><stop offset=".35" stopColor="#f9572f" /><stop offset=".65" stopColor="#c22f92" /><stop offset="1" stopColor="#5a4fd0" /></radialGradient></defs><rect width="32" height="32" rx="7" fill="url(#ig)" /><g fill="none" stroke="#fff" strokeWidth="2.400"><rect x="5" y="5" width="22" height="22" rx="6" /><circle cx="16" cy="16" r="5.500" /></g><circle cx="22.500" cy="9.500" r="1.600" fill="#fff" /></svg>
);
const Spaces = () => <svg width="34" height="26"><path d="M17 1l15 8-14 9L2 10z" fill="#5c8cff" /><path d="M2 11q-2 3 1 6l13 7 12-7M30 10v5" fill="none" stroke="#5c8cff" strokeWidth="2.200" /><circle cx="30" cy="14" r="2.300" fill="#2d2d2d" stroke="#5c8cff" strokeWidth="2" /><circle cx="16" cy="21" r="2.300" fill="#2d2d2d" stroke="#5c8cff" strokeWidth="2" /></svg>;
const Notion = () => <svg width="32" height="32"><path d="M1 3l20-2 9 6v22l-22 2-7-8z" fill="#fff" stroke="#000" strokeWidth="2" /><path d="M1 3l7 6 22-2M8 9v22" fill="none" stroke="#000" strokeWidth="2" /><path d="M14 25V14l9 11V12" fill="none" stroke="#000" strokeWidth="3" /></svg>;
const Profile = () => <svg width="32" height="32"><rect width="32" height="32" fill="#a2d0ee" /><path d="M5 13q1-6 8-7q9-2 12 3l2 6-3 3-5 1-1 7-3-4-1 2-2-5q-4-2-7-6z" fill="#050505" /></svg>;
const Insect = () => <svg width="28" height="30"><rect x="7" y="8" width="14" height="20" rx="7" fill="#8b8b8b" /><path d="M8 7q0-7 6-7t6 7z" fill="#a5a5a5" /><path d="M5 11H1m4 8H1m5 6l-4 3M23 11h4m-4 8h4m-5 6l4 3" stroke="#555" strokeWidth="1.800" /></svg>;

/* ---------- data ---------- */
const dock = [
  [Thunderbird], [Chromium, true, true], [Firefox], [Chrome, false, true],
  [Opera], [Mattermost], [Slack], [Wave], [Postman], [VsCode, false, true], [Kite], [Spring], [Eclipse],
];
const rows = [
  ["test2", "i-015e0e0eeabbcf810", "t3.micro"],
  ["test1", "i-04e376032132b92…", "t3.micro"],
  ["ec2-ubuntu", "i-0601dd59aecd89ced", "t2.micro"],
  ["", "i-095823ba4698a2a…", "t2.micro"],
  ["ms-movie", "i-0c3ec3f765b0aee55", "t2.micro", "ap-northeast-2.compute.amazonaws.com", 155],
  ["cloud-barista…", "i-09488d115559797f5", "t2.micro", "ec2-3-34-123-31.ap-northeast-2.compute.amazonaws.com", 142],
];
const exts = [
  <ExBox>EX</ExBox>, <ICloud />, <Insect />, <><Layers /><ExtBadge $c="#5f3db8">6</ExtBadge></>, <SiGnome size={30} color="#000" />,
  <Braces />, <AcBox>AC</AcBox>, <Gear />, <><Cartoon /><ExtBadge $c="#5c87e6" /></>, <OrgChart />, <Bones />, <Vee />, <KBox />, <ReactBox />,
];

const Group = ({ children, ...p }) => <NavGroup {...p}><Tri w={18} h={14} c={dim.nav} /><span>{children}</span></NavGroup>;

export default function App() {
  return (
    <Screen>
      <Global />
      <TopBar>
        <TopText $s={27} $ls={0.2}>Activities</TopText>
        <Chromium s={32} />
        <TopText $s={27} $ls={0.25}>Chromium Web Browser</TopText>
        <Clock $ls={1.2}>금 00 : 58</Clock>
        <TraySlack /><Dropbox />
        <TopText $s={27.5}>EN</TopText>
        <Wifi /><MdBluetooth size={36} /><Volume /><Battery />
        <TopText $s={22.5}>100 %</TopText>
      </TopBar>
      <Below>
        <Dock>
          {dock.map(([Icon, active, run], i) => (
            <DockItem key={i}>{run && <RunDot />}<DockTile $active={active}><Icon /></DockTile></DockItem>
          ))}
          <AppGrid>{Array.from({ length: 9 }, (_, i) => <i key={i} />)}</AppGrid>
        </Dock>
        <Browser>
          <TitleBar>
            <span />
            <span>인스턴스 | EC2 Management Console - Chromium</span>
            <WinButtons>
              <svg width="16" height="3"><rect width="16" height="3" fill="#fff" /></svg>
              <svg width="16" height="14"><rect x="1.500" y="1.500" width="13" height="11" fill="none" stroke="#fff" strokeWidth="2.500" /></svg>
              <Cross s={13} c="#fff" w={3.5} />
            </WinButtons>
          </TitleBar>
          <TabStrip>
            <Tab><Cube /><TabTitle>인스턴스 | EC2 Management Console</TabTitle><MdClose size={26} /></Tab>
            <NewTab><MdAdd /></NewTab>
          </TabStrip>
          <Toolbar>
            <NavButtons>
              <NavIcon><MdArrowBack /></NavIcon><NavIcon $off><MdArrowForward /></NavIcon><NavIcon><MdRefresh /></NavIcon><NavIcon><MdOutlineHome /></NavIcon>
            </NavButtons>
            <Address>
              <MdLock size={25} /><UrlHost>ap-northeast-2.console.aws.amazon.com</UrlHost>
              <UrlPath>/ec2/v2/home?region=ap-northeast-2#Instances:sort=desc:dnsName</UrlPath>
              <AddressIcon><ZoomOut /></AddressIcon><AddressIcon><MdStarBorder size={34} /></AddressIcon>
            </Address>
            <Extensions>{exts.map((e, i) => <Ext key={i}>{e}</Ext>)}</Extensions>
            <Divider $ml={12} /><Avatar>J</Avatar><MdMoreVert size={40} />
          </Toolbar>
          <Bookmarks>
            <IconMark $c="#e0e0e0"><MdPublic size={34} /></IconMark>
            <IconMark><Insta /></IconMark>
            <IconMark $c="#4c97f5"><FaFacebook /></IconMark>
            <IconMark $c="#549fe6"><FaTwitter size={28} /></IconMark>
            <MarkGap />
            <Bookmark $w={190}><MarkIcon><NBox>N</NBox></MarkIcon><MarkLabel $ls={1.2}>NAVER</MarkLabel></Bookmark>
            <Bookmark $w={308}><MarkIcon><GaBox>가</GaBox></MarkIcon><MarkLabel $s={35} $ls={0.7}>네이버 영어…</MarkLabel></Bookmark>
            <Bookmark $w={308}><MarkIcon><FaGithub color="#24292e" /></MarkIcon><MarkLabel $ls={0.6}>chloe-codes…</MarkLabel></Bookmark>
            <Bookmark $w={308}><MarkIcon><ShellBox>S</ShellBox></MarkIcon><MarkLabel $ls={0.75}>Projects · Da…</MarkLabel></Bookmark>
            <Bookmark $w={296}><MarkIcon><ShellBox>S</ShellBox></MarkIcon><MarkLabel $ls={-0.23}>aclass · GitLab</MarkLabel></Bookmark>
            <Bookmark $w={308}><MarkIcon><Spaces /></MarkIcon><MarkLabel $ls={0.46}>Spaces - Git…</MarkLabel></Bookmark>
            <Bookmark $w={308}><MarkIcon><Notion /></MarkIcon><MarkLabel $ls={1.3}>Getting Star…</MarkLabel></Bookmark>
            <Bookmark $w={308}><MarkIcon><Profile /></MarkIcon><MarkLabel $ls={0.3}>JavaScript |…</MarkLabel></Bookmark>
            <More>»</More><Divider /><IconMark $c="#c4c4c4" $w={69}><MdFolder size={36} /></IconMark>
            <MarkLabel $ls={-0.25}>Other bookmarks</MarkLabel>
          </Bookmarks>
          <AwsHeader>
            <AwsLogo>aws<Smile /></AwsLogo>
            <NavText>서비스</NavText><Caret /><NavText>리소스 그룹</NavText><Caret />
            <Pin size={25} />
            <Bell />
            <NavSmall $ls={1.2}>Chloe</NavSmall><Caret w={14} h={8} /><NavSmall>서울</NavSmall><Caret w={14} h={8} /><NavSmall>지원</NavSmall><Caret w={14} h={8} />
          </AwsHeader>
          <Console>
            <Sidebar>
              <Experience>
                <Toggle><i /></Toggle>
                <ExperienceText>New EC2 Experience<ExperienceSub>Tell us what you think</ExperienceSub></ExperienceText>
                <ExperienceClose><Cross s={25} /></ExperienceClose>
              </Experience>
              <NavList>
                <NavItem $h={57}>EC2 대시보드<NewTag>New</NewTag></NavItem>
                <NavItem $h={57}>이벤트<NewTag>New</NewTag></NavItem>
                <NavItem $h={56}>태그</NavItem>
                <NavItem $h={55}>제한</NavItem>
                <Group $mt={16}>인스턴스</Group>
                <NavItem $on>인스턴스</NavItem>
                <NavItem $ls={0.6}>인스턴스 유형</NavItem>
                <NavItem>시작 템플릿</NavItem>
                <NavItem>스팟 요청</NavItem>
                <NavItem $ls={-0.5}>Savings Plans</NavItem>
                <NavItem>예약 인스턴스</NavItem>
                <NavItem>전용 호스트<NewTag>New</NewTag></NavItem>
                <NavItem>용량 예약</NavItem>
                <Group $mt={20}>이미지</Group>
                <NavItem $h={57}>AMI</NavItem>
                <Group $w={700} $ls={-0.55}>Elastic Block Store</Group>
                <NavItem $h={55}>볼륨</NavItem>
                <NavItem>스냅샷</NavItem>
                <NavItem>수명 주기 관리자</NavItem>
                <Group>네트워크 및 보안</Group>
                <NavItem $h={56}>보안 그룹<NewTag>New</NewTag></NavItem>
              </NavList>
            </Sidebar>
            <VBar $h={1330} $bg={dim.track}>
              <BarEnd><Tri d="up" c="#6e7276" /></BarEnd><VThumb $h={818} $c={dim.thumb} /><BarEnd><Tri c="#34373b" /></BarEnd>
            </VBar>
            <Right>
              <RightTop>
                <Panel>
                  <Actions>
                    <Split><SplitMain>인스턴스 시작</SplitMain><SplitArrow><Tri w={20} h={12} c="#c0c6d0" /></SplitArrow></Split>
                    <FocusButton>연결</FocusButton>
                    <GreyButton>작업<Caret w={18} h={11} c="#5d6065" /></GreyButton>
                    <Tools><FaFlask size={29} color="#23262b" /><Sync /><FaCog size={30} /><FaQuestionCircle size={30} /></Tools>
                  </Actions>
                  <FilterBar>
                    <SearchBox><FaSearch size={30} color="#5e6267" /><span>태그 및 속성별 필터 또는 키워드별 검색</span><FaQuestionCircle size={30} color="#6c7075" /></SearchBox>
                    <Pager><Chev bar /><Chev /><b>1 ~6/6</b><Chev flip /><Chev flip bar /></Pager>
                  </FilterBar>
                  <THead>
                    <Check $head />
                    <Th $w={700}>Name<Tri w={13} h={8} c="#6e7276" /></Th>
                    <Th>인스턴스 ID<Tri w={13} h={8} c="#6e7276" /></Th>
                    <Th $pr={2}>인스턴스 유형<Tri w={12} h={8} c="#34373b" /></Th>
                  </THead>
                  {rows.map(([n, id, t, dns, r], i) => (
                    <Tr key={id} $on={i === 5}><Check $on={i === 5} /><span>{n}</span><span>{id}</span>
                      <TypeCell><span>{t}</span>{dns && <Dns $r={r}>{dns}</Dns>}</TypeCell></Tr>
                  ))}
                  <TableFoot>
                    <HBar $w={2572} $bg="#9b9fa3">
                      <BarEnd><Tri d="left" w={7} h={14} c="#7b7f84" /></BarEnd><HThumb $w={1500} $c="#8a8d91" /><BarEnd><Tri d="right" w={8} h={14} c="#5a5d62" /></BarEnd>
                    </HBar>
                    <Rule $h={3} />
                  </TableFoot>
                  <Detail>
                    <DetailBody>
                      <DetailTitle>
                        <span>인스턴스:</span><i />i-09488d115559797f5 (cloud-barista-test)
                        <div><PaneIcon y={18.5} /><PaneIcon y={14.5} /><PaneIcon y={10.5} /></div>
                      </DetailTitle>
                      <Tabs>
                        <DTab $w={93} $on>설명</DTab><DTab $w={147}>상태 검사</DTab><DTab $w={142}>모니터링</DTab><DTab $w={94}>태그</DTab>
                      </Tabs>
                      <Facts>
                        <Label>인스턴스 ID</Label><Value>i-09488d115559797f5</Value>
                        <Label>퍼블릭 DNS(IPv4)</Label><Value>ec2-3-34-123-31.ap-northeast-2.compute.amazonaws.com</Value>
                        <Label $tip>인스턴스 상태</Label><Value>running</Value><i /><i />
                        <Label $tip>인스턴스 유형</Label><Value>t2.micro</Value><i /><i />
                        <Label $tip>결과</Label><Value $lh={36} $pt={3}>{"권장 사항을 위해 AWS Compute Optimizer에 옵트인합니다.\n"}<em>보기</em></Value><i /><i />
                        <Label $tip>프라이빗 DNS</Label><Value>ip-172-31-10-16</Value><i /><i />
                        <Label $tip>프라이빗 IP</Label><Value>172.31.10.16</Value><Label>보안 그룹</Label><Value $link>cloud-barista-test-1. 인바운드 규칙 보기. 아웃바운드 규칙 보기</Value>
                        <Label $tip>보조 프라이빗 IP</Label><i /><i /><i />
                        <Label $tip>VPC ID</Label><Value $link>vpc-7806d513</Value>
                        <Label $tip>AMI ID</Label><Value $link $lh={36} $pt={3}>{"ubuntu/images/hvm-ssd/ubuntu-bionic-18.04-amd64-server-\n20200611 (ami-0d777f54156eae7d9)"}</Value>
                        <Label $tip>서브넷 ID</Label><Value $link>subnet-0f6fa264</Value>
                        <Label $tip>Platform details</Label><Value>Linux/UNIX</Value>
                      </Facts>
                    </DetailBody>
                    <DetailBar>
                      <VBar $h={605} $bg={dim.track}><BarEnd><Tri d="up" c="#7b7f84" /></BarEnd><VThumb $h={200} $c={dim.thumb} /><BarEnd><Tri c="#34373b" /></BarEnd></VBar>
                    </DetailBar>
                  </Detail>
                </Panel>
                <VBar $h={1300} $bg="#f1f1f1"><BarEnd><Tri d="up" c="#a3a3a3" /></BarEnd><VThumb $h={1212} $c="#c1c1c1" /><BarEnd><Tri /></BarEnd></VBar>
              </RightTop>
              <RightBottom>
                <HBar $w={2608} $bg="#f1f1f1"><BarEnd><Tri d="left" w={8} h={14} c="#a3a3a3" /></BarEnd><HThumb $w={2518} $c="#c1c1c1" /><BarEnd><Tri d="right" w={8} h={14} /></BarEnd></HBar>
              </RightBottom>
            </Right>
          </Console>
          <Footer>
            <FaComment size={30} color="#8f9399" /><span>의견</span><FaGlobeAmericas size={29} color="#9a9ea4" /><span>한국어</span>
            <FootText $ls={-0.16} $c="#6f757e">© 2008 - 2020, Amazon Web Services, Inc. 또는 계열사. All rights reserved.</FootText>
            <FootText $ls={0.2}>개인 정보 보호 정책</FootText><FootText>이용 약관</FootText>
          </Footer>
          <Dialog>
            <DialogHead>인스턴스에 연결<Cross s={25} c="#444" w={3.6} /></DialogHead>
            <DialogBody>
              <Methods>
                <Strong>연결 방법</Strong>
                <MethodList>
                  <Method><Radio $on />독립 실행형 SSH 클라이언트<Info>i</Info></Method>
                  <Method $ls={0}><Radio />Session Manager<Info>i</Info></Method>
                  <Method><Radio />EC2 인스턴스 연결(브라우저 기반 SSH 연결)<Info>i</Info></Method>
                </MethodList>
              </Methods>
              <Rule $c="#ccc" $h={2} $mt={23} />
              <Strong $mt={21}>인스턴스 액세스 방법:</Strong>
              <Steps>
                <StepNo>1.</StepNo><Step>SSH 클라이언트를 엽니다(<Link>PuTTY를 사용하여 연결</Link> 방법 알아보기).</Step>
                <StepNo>2.</StepNo><Step>프라이빗 키 파일(cloud-barista.pem)을 찾습니다. 마법사가 인스턴스를 시작하는 데 사용되는 키를 자동으로 검색합니다.</Step>
                <StepNo>3.</StepNo><Step>SSH가 작동하려면 키가 공개적으로 표시되지 않아야 합니다. 필요할 경우 이 명령을 사용합니다.</Step>
                <Code $h={77} $pl={115}>chmod 400 cloud-barista.pem</Code>
                <StepNo>4.</StepNo><Step>퍼블릭 DNS을(를) 사용하여 인스턴스에 연결:</Step>
                <Code $h={78} $pl={115}>ec2-3-34-123-31.ap-northeast-2.compute.amazonaws.com</Code>
              </Steps>
              <Strong $mt={4}>예:</Strong>
              <Code $h={88} $pl={107}>ssh -i "cloud-barista.pem" ubuntu@ec2-3-34-123-31.ap-northeast-2.compute.amazonaws.com</Code>
              <Note>{"대부분의 경우 위의 사용자 이름이 맞지만, AMI 사용 지침을 숙지하여 AMI 소유자가 기본 AMI 사용자 이름을 변경하지 않도\n록 하십시오."}</Note>
              <Help>인스턴스에 연결하는 데 도움이 필요한 경우 <Link $r={3}>연결 설명서</Link>을(를) 참조하십시오.</Help>
            </DialogBody>
            <DialogFoot><Close>닫기</Close></DialogFoot>
          </Dialog>
        </Browser>
      </Below>
    </Screen>
  );
}
